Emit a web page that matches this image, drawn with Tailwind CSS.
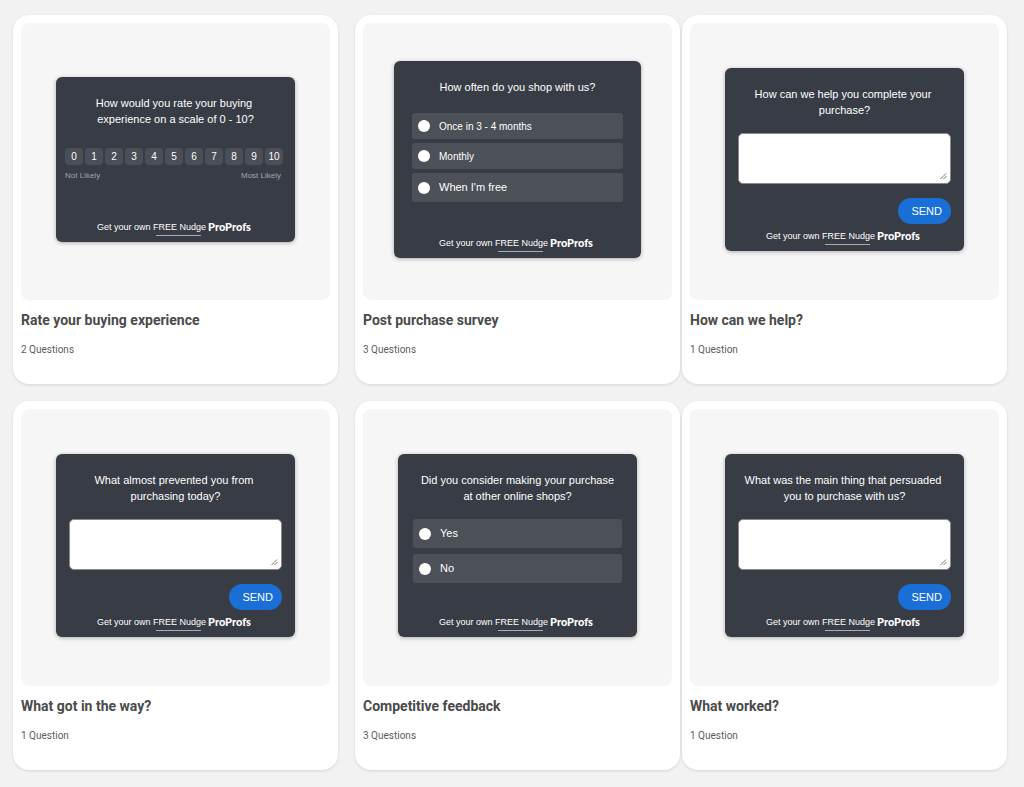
<!DOCTYPE html>
<html lang="en">

<head>
  <meta charset="UTF-8">
  <meta name="viewport" content="width=device-width, initial-scale=1.0">
  <title>Nudge Templates</title>
  <script src="https://cdn.jsdelivr.net/npm/@tailwindcss/browser@4"></script>
</head>

<body class="bg-[#f2f2f2] font-['Roboto',sans-serif] text-[#4a4a4a]">
  <main class="pt-[15px] pr-[17px] pb-4 pl-[13px] flex flex-col gap-[17px]">

    <!-- Row 1 -->
    <div class="flex">
      <!-- Rate your buying experience -->
      <article class="flex-1 bg-white rounded-2xl shadow-[0_1px_3px_rgba(0,0,0,0.12)] p-2 pb-[26px]">
        <div class="h-[277px] pb-1 bg-[#f6f6f6] rounded-lg flex items-center justify-center">
          <section class="w-[239px] h-[165px] pt-[18px] pb-[7px] flex flex-col bg-[#383c45] text-white rounded-md shadow-[0_1px_4px_rgba(0,0,0,0.3)] font-['Liberation_Sans',Arial,sans-serif]">
            <h3 class="text-[11px] leading-4 text-center">How would you rate your buying&nbsp;<br>experience on a scale of 0 - 10?</h3>
            <div class="mt-[21px] pl-[9px] pr-3">
              <div class="flex gap-[2px] text-[10px] leading-[17px]">
                <button class="flex-1 bg-[#4a4e56] rounded-sm">0</button>
                <button class="flex-1 bg-[#4a4e56] rounded-sm">1</button>
                <button class="flex-1 bg-[#4a4e56] rounded-sm">2</button>
                <button class="flex-1 bg-[#4a4e56] rounded-sm">3</button>
                <button class="flex-1 bg-[#4a4e56] rounded-sm">4</button>
                <button class="flex-1 bg-[#4a4e56] rounded-sm">5</button>
                <button class="flex-1 bg-[#4a4e56] rounded-sm">6</button>
                <button class="flex-1 bg-[#4a4e56] rounded-sm">7</button>
                <button class="flex-1 bg-[#4a4e56] rounded-sm">8</button>
                <button class="flex-1 bg-[#4a4e56] rounded-sm">9</button>
                <button class="flex-1 bg-[#4a4e56] rounded-sm">10</button>
              </div>
              <div class="mt-[5px] pr-[2px] flex justify-between text-[8px] leading-3 text-[#a3a5a9]">
                <span>Not Likely</span>
                <span>Most Likely</span>
              </div>
            </div>
            <p class="mt-auto pr-[3px] flex justify-center text-[9px] leading-4 whitespace-pre">Get your own <a href="#" class="relative after:absolute after:left-[3px] after:right-[5px] after:-bottom-px after:h-px after:bg-[#a9abaf]">FREE Nudge</a><span class="ml-[2px] font-['Lato',sans-serif] font-black text-[11px]">ProProfs</span></p>
          </section>
        </div>
        <h2 class="mt-[10px] text-[14px] leading-5 font-bold">Rate your buying experience</h2>
        <p class="mt-3 text-[10px] leading-4 text-[#5c5c5c]">2 Questions</p>
      </article>

      <!-- Post purchase survey -->
      <article class="flex-1 ml-[17px] bg-white rounded-2xl shadow-[0_1px_3px_rgba(0,0,0,0.12)] p-2 pb-[26px]">
        <div class="h-[277px] pb-1 bg-[#f6f6f6] rounded-lg flex items-center justify-center">
          <section class="w-[247px] h-[197px] pt-[18px] pb-[7px] flex flex-col bg-[#383c45] text-white rounded-md shadow-[0_1px_4px_rgba(0,0,0,0.3)] font-['Liberation_Sans',Arial,sans-serif]">
            <h3 class="text-[11px] leading-4 text-center">How often do you shop with us?</h3>
            <div class="mt-[18px] px-[18px] flex flex-col gap-1">
              <label class="h-[26px] px-[6px] flex items-center gap-[9px] bg-[#4c5057] rounded-[3px] text-[10px]">
                <input type="radio" name="often" class="appearance-none size-3 rounded-full bg-white checked:bg-[#1a6fd6]">Once in 3 - 4 months
              </label>
              <label class="h-[26px] px-[6px] flex items-center gap-[9px] bg-[#4c5057] rounded-[3px] text-[10px]">
                <input type="radio" name="often" class="appearance-none size-3 rounded-full bg-white checked:bg-[#1a6fd6]">Monthly
              </label>
              <label class="h-[29px] px-[6px] flex items-center gap-[9px] bg-[#4c5057] rounded-[2px] text-[11px]">
                <input type="radio" name="often" class="appearance-none size-3 rounded-full bg-white checked:bg-[#1a6fd6]">When I'm free
              </label>
            </div>
            <p class="mt-auto pr-[3px] flex justify-center text-[9px] leading-4 whitespace-pre">Get your own <a href="#" class="relative after:absolute after:left-[3px] after:right-[5px] after:-bottom-px after:h-px after:bg-[#a9abaf]">FREE Nudge</a><span class="ml-[2px] font-['Lato',sans-serif] font-black text-[11px]">ProProfs</span></p>
          </section>
        </div>
        <h2 class="mt-[10px] text-[14px] leading-5 font-bold">Post purchase survey</h2>
        <p class="mt-3 text-[10px] leading-4 text-[#5c5c5c]">3 Questions</p>
      </article>

      <!-- How can we help? -->
      <article class="flex-1 ml-[2px] bg-white rounded-2xl shadow-[0_1px_3px_rgba(0,0,0,0.12)] p-2 pb-[26px]">
        <div class="h-[277px] pb-1 bg-[#f6f6f6] rounded-lg flex items-center justify-center">
          <section class="w-[239px] h-[183px] pt-[18px] pb-[7px] flex flex-col bg-[#383c45] text-white rounded-md shadow-[0_1px_4px_rgba(0,0,0,0.3)] font-['Liberation_Sans',Arial,sans-serif]">
            <h3 id="q-help" class="text-[11px] leading-4 text-center">How can we help you complete your&nbsp;<br>purchase?</h3>
            <div class="mt-[15px] px-[13px] flex flex-col">
              <div class="relative flex">
                <textarea aria-labelledby="q-help" class="w-full h-[51px] p-1 resize-none bg-white border border-[#8a8a8a] rounded-[5px] text-[11px] text-gray-800"></textarea>
                <svg class="absolute right-1 bottom-1 size-[7px]" viewBox="0 0 7 7" fill="none" stroke="#777" stroke-width="1"><path d="M0.5 6L6 0.5M3.5 6L6.5 3" /></svg>
              </div>
              <button class="mt-[14px] self-end h-[26px] pl-[13px] pr-[9px] bg-[#1a6fd6] rounded-full text-[11px]">SEND</button>
            </div>
            <p class="mt-auto pr-[3px] flex justify-center text-[9px] leading-4 whitespace-pre">Get your own <a href="#" class="relative after:absolute after:left-[3px] after:right-[5px] after:-bottom-px after:h-px after:bg-[#a9abaf]">FREE Nudge</a><span class="ml-[2px] font-['Lato',sans-serif] font-black text-[11px]">ProProfs</span></p>
          </section>
        </div>
        <h2 class="mt-[10px] text-[14px] leading-5 font-bold">How can we help?</h2>
        <p class="mt-3 text-[10px] leading-4 text-[#5c5c5c]">1 Question</p>
      </article>
    </div>

    <!-- Row 2 -->
    <div class="flex">
      <!-- What got in the way? -->
      <article class="flex-1 bg-white rounded-2xl shadow-[0_1px_3px_rgba(0,0,0,0.12)] p-2 pb-[26px]">
        <div class="h-[277px] pb-1 bg-[#f6f6f6] rounded-lg flex items-center justify-center">
          <section class="w-[239px] h-[183px] pt-[18px] pb-[7px] flex flex-col bg-[#383c45] text-white rounded-md shadow-[0_1px_4px_rgba(0,0,0,0.3)] font-['Liberation_Sans',Arial,sans-serif]">
            <h3 id="q-prevented" class="text-[11px] leading-4 text-center">What almost prevented you from&nbsp;<br>purchasing today?</h3>
            <div class="mt-[15px] px-[13px] flex flex-col">
              <div class="relative flex">
                <textarea aria-labelledby="q-prevented" class="w-full h-[51px] p-1 resize-none bg-white border border-[#8a8a8a] rounded-[5px] text-[11px] text-gray-800"></textarea>
                <svg class="absolute right-1 bottom-1 size-[7px]" viewBox="0 0 7 7" fill="none" stroke="#777" stroke-width="1"><path d="M0.5 6L6 0.5M3.5 6L6.5 3" /></svg>
              </div>
              <button class="mt-[14px] self-end h-[26px] pl-[13px] pr-[9px] bg-[#1a6fd6] rounded-full text-[11px]">SEND</button>
            </div>
            <p class="mt-auto pr-[3px] flex justify-center text-[9px] leading-4 whitespace-pre">Get your own <a href="#" class="relative after:absolute after:left-[3px] after:right-[5px] after:-bottom-px after:h-px after:bg-[#a9abaf]">FREE Nudge</a><span class="ml-[2px] font-['Lato',sans-serif] font-black text-[11px]">ProProfs</span></p>
          </section>
        </div>
        <h2 class="mt-[10px] text-[14px] leading-5 font-bold">What got in the way?</h2>
        <p class="mt-3 text-[10px] leading-4 text-[#5c5c5c]">1 Question</p>
      </article>

      <!-- Competitive feedback -->
      <article class="flex-1 ml-[17px] bg-white rounded-2xl shadow-[0_1px_3px_rgba(0,0,0,0.12)] p-2 pb-[26px]">
        <div class="h-[277px] pb-1 bg-[#f6f6f6] rounded-lg flex items-center justify-center">
          <section class="w-[239px] h-[183px] pt-[18px] pb-[7px] flex flex-col bg-[#383c45] text-white rounded-md shadow-[0_1px_4px_rgba(0,0,0,0.3)] font-['Liberation_Sans',Arial,sans-serif]">
            <h3 class="text-[11px] leading-4 text-center">Did you consider making your purchase<br>at other online shops?</h3>
            <div class="mt-[15px] px-[15px] flex flex-col gap-[6px]">
              <label class="h-[29px] px-[6px] flex items-center gap-[9px] bg-[#4c5057] rounded-[3px] text-[11px]">
                <input type="radio" name="shops" class="appearance-none size-3 rounded-full bg-white checked:bg-[#1a6fd6]">Yes
              </label>
              <label class="h-[29px] px-[6px] flex items-center gap-[9px] bg-[#4c5057] rounded-[2px] text-[11px]">
                <input type="radio" name="shops" class="appearance-none size-3 rounded-full bg-white checked:bg-[#1a6fd6]">No
              </label>
            </div>
            <p class="mt-auto pr-[3px] flex justify-center text-[9px] leading-4 whitespace-pre">Get your own <a href="#" class="relative after:absolute after:left-[3px] after:right-[5px] after:-bottom-px after:h-px after:bg-[#a9abaf]">FREE Nudge</a><span class="ml-[2px] font-['Lato',sans-serif] font-black text-[11px]">ProProfs</span></p>
          </section>
        </div>
        <h2 class="mt-[10px] text-[14px] leading-5 font-bold">Competitive feedback</h2>
        <p class="mt-3 text-[10px] leading-4 text-[#5c5c5c]">3 Questions</p>
      </article>

      <!-- What worked? -->
      <article class="flex-1 ml-[2px] bg-white rounded-2xl shadow-[0_1px_3px_rgba(0,0,0,0.12)] p-2 pb-[26px]">
        <div class="h-[277px] pb-1 bg-[#f6f6f6] rounded-lg flex items-center justify-center">
          <section class="w-[239px] h-[183px] pt-[18px] pb-[7px] flex flex-col bg-[#383c45] text-white rounded-md shadow-[0_1px_4px_rgba(0,0,0,0.3)] font-['Liberation_Sans',Arial,sans-serif]">
            <h3 id="q-persuaded" class="text-[11px] leading-4 text-center">What was the main thing that persuaded&nbsp;<br>you to purchase with us?</h3>
            <div class="mt-[15px] px-[13px] flex flex-col">
              <div class="relative flex">
                <textarea aria-labelledby="q-persuaded" class="w-full h-[51px] p-1 resize-none bg-white border border-[#8a8a8a] rounded-[5px] text-[11px] text-gray-800"></textarea>
                <svg class="absolute right-1 bottom-1 size-[7px]" viewBox="0 0 7 7" fill="none" stroke="#777" stroke-width="1"><path d="M0.5 6L6 0.5M3.5 6L6.5 3" /></svg>
              </div>
              <button class="mt-[14px] self-end h-[26px] pl-[13px] pr-[9px] bg-[#1a6fd6] rounded-full text-[11px]">SEND</button>
            </div>
            <p class="mt-auto pr-[3px] flex justify-center text-[9px] leading-4 whitespace-pre">Get your own <a href="#" class="relative after:absolute after:left-[3px] after:right-[5px] after:-bottom-px after:h-px after:bg-[#a9abaf]">FREE Nudge</a><span class="ml-[2px] font-['Lato',sans-serif] font-black text-[11px]">ProProfs</span></p>
          </section>
        </div>
        <h2 class="mt-[10px] text-[14px] leading-5 font-bold">What worked?</h2>
        <p class="mt-3 text-[10px] leading-4 text-[#5c5c5c]">1 Question</p>
      </article>
    </div>

  </main>
</body>

</html>
